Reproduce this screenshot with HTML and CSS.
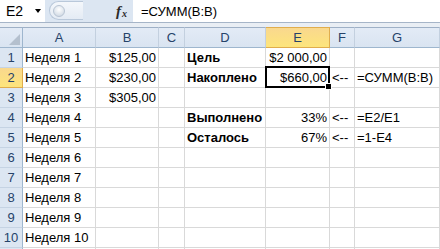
FILE: index.html
```html
<!DOCTYPE html>
<html>
<head>
<meta charset="utf-8">
<link rel="stylesheet" href="styles.css">
</head>
<body>
<div class="fbar">
  <div class="namebox"><span class="nb-text">E2</span><span class="caret"></span></div>
  <div class="splitter"><span class="knob"></span></div>
  <div class="fx"><span class="fx-f">f</span><span class="fx-x">x</span></div>
  <div class="input">=СУММ(B:B)</div>
</div>
<div class="band"></div>
<div class="sheet">
  <div class="h corner"></div>
  <div class="h">A</div><div class="h">B</div><div class="h">C</div><div class="h">D</div><div class="h sel">E</div><div class="h">F</div><div class="h">G</div>

  <div class="r">1</div><div class="c">Неделя 1</div><div class="c num">$125,00</div><div class="c"></div><div class="c b">Цель</div><div class="c num">$2 000,00</div><div class="c"></div><div class="c"></div>
  <div class="r sel">2</div><div class="c">Неделя 2</div><div class="c num">$230,00</div><div class="c"></div><div class="c b">Накоплено</div><div class="c num active">$660,00</div><div class="c">&lt;--</div><div class="c">=СУММ(B:B)</div>
  <div class="r">3</div><div class="c">Неделя 3</div><div class="c num">$305,00</div><div class="c"></div><div class="c"></div><div class="c"></div><div class="c"></div><div class="c"></div>
  <div class="r">4</div><div class="c">Неделя 4</div><div class="c"></div><div class="c"></div><div class="c b">Выполнено</div><div class="c num">33%</div><div class="c">&lt;--</div><div class="c">=E2/E1</div>
  <div class="r">5</div><div class="c">Неделя 5</div><div class="c"></div><div class="c"></div><div class="c b">Осталось</div><div class="c num">67%</div><div class="c">&lt;--</div><div class="c">=1-E4</div>
  <div class="r">6</div><div class="c">Неделя 6</div><div class="c"></div><div class="c"></div><div class="c"></div><div class="c"></div><div class="c"></div><div class="c"></div>
  <div class="r">7</div><div class="c">Неделя 7</div><div class="c"></div><div class="c"></div><div class="c"></div><div class="c"></div><div class="c"></div><div class="c"></div>
  <div class="r">8</div><div class="c">Неделя 8</div><div class="c"></div><div class="c"></div><div class="c"></div><div class="c"></div><div class="c"></div><div class="c"></div>
  <div class="r">9</div><div class="c">Неделя 9</div><div class="c"></div><div class="c"></div><div class="c"></div><div class="c"></div><div class="c"></div><div class="c"></div>
  <div class="r">10</div><div class="c">Неделя 10</div><div class="c"></div><div class="c"></div><div class="c"></div><div class="c"></div><div class="c"></div><div class="c"></div>
  <div class="r"></div><div class="c"></div><div class="c"></div><div class="c"></div><div class="c"></div><div class="c"></div><div class="c"></div><div class="c"></div>
</div>
</body>
</html>
```

FILE: styles.css
```css
html, body {
  margin: 0;
  padding: 0;
}
body {
  width: 440px;
  height: 249px;
  overflow: hidden;
  background: #ffffff;
  font-family: "Liberation Sans", Arial, sans-serif;
  font-size: 13px;
  color: #000;
}

/* formula bar */
.fbar {
  display: flex;
  height: 22px;
  background: #dce6f2;
  border-bottom: 1px solid #a6b5c8;
}
.namebox {
  width: 45px;
  background: #fff;
  display: flex;
  align-items: center;
}
.nb-text {
  padding-left: 6px;
  font-size: 14px;
}
.caret {
  margin-left: 12px;
  width: 0;
  height: 0;
  border-left: 3.5px solid transparent;
  border-right: 3.5px solid transparent;
  border-top: 4px solid #000;
}
.splitter {
  margin: 1px 0 0 4px;
  width: 34px;
  height: 19px;
  border-radius: 10px 0 0 10px;
  border: 1px solid #b9c8da;
  border-right: none;
  background: linear-gradient(#f4f7fb, #e4ebf4);
  display: flex;
  align-items: center;
  padding-left: 3px;
  box-sizing: border-box;
}
.knob {
  width: 10px;
  height: 10px;
  border-radius: 50%;
  background: radial-gradient(circle at 50% 35%, #ffffff, #c7d2df);
  border: 1px solid #b8c4d3;
}
.fx {
  margin-left: 33px;
  width: 17px;
  display: flex;
  align-items: center;
  font-family: "Liberation Serif", "Times New Roman", serif;
  font-style: italic;
  font-weight: bold;
  color: #2b2b2b;
}
.fx-f {
  font-size: 15px;
}
.fx-x {
  font-size: 10px;
  margin-top: 4px;
  margin-left: 1px;
}
.input {
  flex: 1;
  background: #fff;
  padding-left: 8px;
  display: flex;
  align-items: center;
  font-size: 13px;
}

.band {
  height: 4px;
  background: #e9eef4;
}

/* sheet grid */
.sheet {
  display: grid;
  grid-template-columns: 23px 73px 63px 26px 81px 64px 25px 85px;
  grid-template-rows: 21px;
  grid-auto-rows: 20px;
}
.h, .r, .c {
  box-sizing: border-box;
  display: flex;
  align-items: center;
  white-space: nowrap;
}
.h {
  border-top: 1px solid #9eb0c6;
  border-bottom: 1px solid #9eb6ce;
  border-right: 1px solid #c3d0df;
  background: linear-gradient(#e3ebf6, #d9e4f1);
  justify-content: center;
  color: #26436a;
}
.corner {
  position: relative;
  border-right: 1px solid #9eb6ce;
}
.corner::after {
  content: "";
  position: absolute;
  right: 2px;
  bottom: 2px;
  width: 0;
  height: 0;
  border-left: 11px solid transparent;
  border-bottom: 11px solid #b4c0ce;
}
.r {
  border-right: 1px solid #9eb6ce;
  border-bottom: 1px solid #c5d3e3;
  background: #dce6f2;
  justify-content: center;
  color: #26436a;
}
.h.sel, .r.sel {
  background: linear-gradient(#f9d88e, #fde57c);
  border-color: #e0ad4d;
}
.c {
  border-right: 1px solid #d9d9d9;
  border-bottom: 1px solid #d9d9d9;
  padding: 0 2px;
}
.num {
  justify-content: flex-end;
}
.b {
  font-weight: bold;
}
.active {
  position: relative;
}
.active::after {
  content: "";
  position: absolute;
  top: -2px;
  left: -1px;
  right: -1px;
  bottom: -1px;
  border: 2px solid #000;
}
.active::before {
  content: "";
  position: absolute;
  right: -3px;
  bottom: -3px;
  width: 5px;
  height: 5px;
  background: #000;
  border: 1px solid #fff;
  z-index: 2;
}
```
